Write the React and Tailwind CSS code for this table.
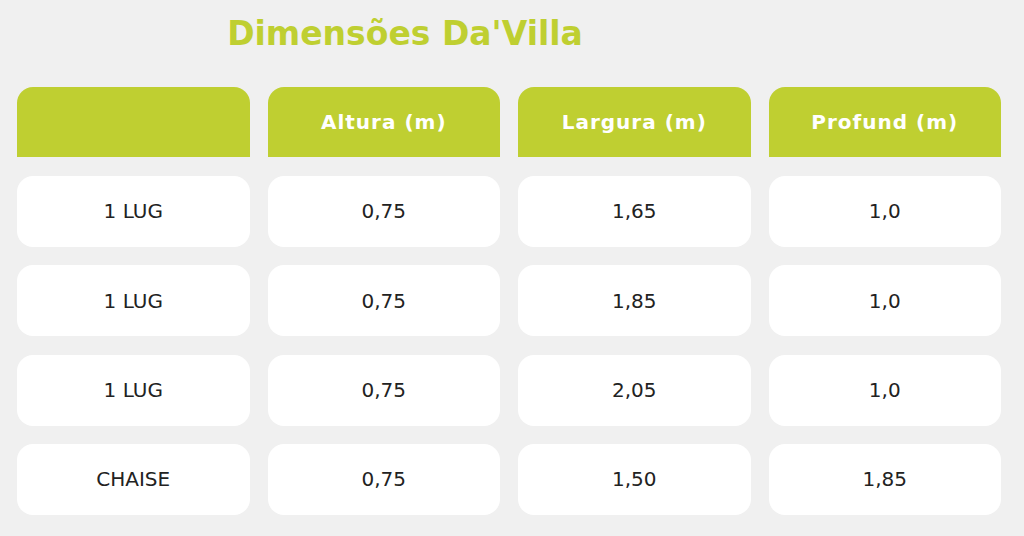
const headers = ["", "Altura (m)", "Largura (m)", "Profund (m)"];

const rows = [
  ["1 LUG", "0,75", "1,65", "1,0"],
  ["1 LUG", "0,75", "1,85", "1,0"],
  ["1 LUG", "0,75", "2,05", "1,0"],
  ["CHAISE", "0,75", "1,50", "1,85"],
];

export default function App() {
  return (
    <div className="min-h-[536px] w-[1024px] bg-[#f0f0f0] font-['DejaVu_Sans',sans-serif]">
      <div className="w-[810px] h-[87px] pt-[10px] text-center">
        <h1 className="text-[33px] leading-[48px] font-bold text-[#bfcf31]">
          Dimensões Da'Villa
        </h1>
      </div>
      <div className="w-[984px] ml-[17px] flex flex-col gap-[18.3px]">
        <div className="grid grid-cols-4 gap-x-[18px] mb-[0.7px]">
          {headers.map((h, i) => (
            <div
              key={i}
              className="h-[70px] bg-[#bfcf31] rounded-t-[16px] flex items-center justify-center text-white text-[20px] font-bold tracking-[1px]"
            >
              {h}
            </div>
          ))}
        </div>
        {rows.map((r, i) => (
          <div key={i} className="grid grid-cols-4 gap-x-[18px]">
            {r.map((c, j) => (
              <div
                key={j}
                className="h-[71px] bg-white rounded-[16px] flex items-center justify-center text-[20px] text-[#222]"
              >
                {c}
              </div>
            ))}
          </div>
        ))}
      </div>
    </div>
  );
}
